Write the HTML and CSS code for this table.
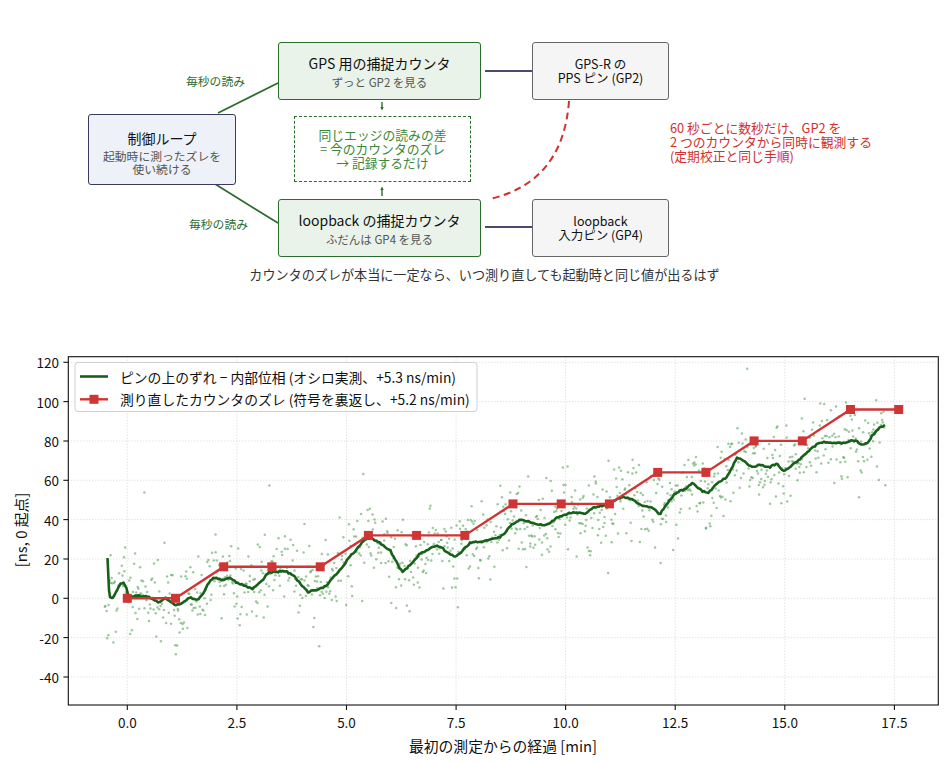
FILE: index.html
```html
<!DOCTYPE html>
<html lang="ja">
<head>
<meta charset="utf-8">
<title>カウンタのズレ</title>
<link rel="stylesheet" href="styles.css">
</head>
<body>
<div class="page">
  <section class="diagram">
    <svg class="wires" width="948" height="300" viewBox="0 0 948 300">
      <line x1="218" y1="113" x2="278" y2="83" class="w-green"/>
      <line x1="215" y1="184" x2="278" y2="223" class="w-green"/>
      <line x1="485" y1="71" x2="532" y2="71" class="w-navy"/>
      <line x1="485" y1="227" x2="532" y2="227" class="w-navy"/>
      <line x1="382" y1="102" x2="382" y2="109" class="w-tiny"/>
      <path d="M380.3,107 L382,110.5 L383.7,107 Z" class="a-tiny"/>
      <line x1="382" y1="188" x2="382" y2="196" class="w-tiny"/>
      <path d="M380.3,190 L382,186.5 L383.7,190 Z" class="a-tiny"/>
      <path d="M569,101 Q563,182 490,199" class="w-red"/>
    </svg>

    <div class="node ctrl">
      <div class="title">制御ループ</div>
      <div class="sub">起動時に測ったズレを<br>使い続ける</div>
    </div>
    <div class="node cnt gps">
      <div class="title">GPS 用の捕捉カウンタ</div>
      <div class="sub">ずっと GP2 を見る</div>
    </div>
    <div class="node cnt lb">
      <div class="title">loopback の捕捉カウンタ</div>
      <div class="sub">ふだんは GP4 を見る</div>
    </div>
    <div class="node diff">同じエッジの読みの差<br>= 今のカウンタのズレ<br>→ 記録するだけ</div>
    <div class="node pin pin1">GPS-R の<br>PPS ピン (GP2)</div>
    <div class="node pin pin2">loopback<br>入力ピン (GP4)</div>

    <div class="edge-label el1">毎秒の読み</div>
    <div class="edge-label el2">毎秒の読み</div>
    <div class="red-note">60 秒ごとに数秒だけ、GP2 を<br>2 つのカウンタから同時に観測する<br>(定期校正と同じ手順)</div>
    <p class="caption">カウンタのズレが本当に一定なら、いつ測り直しても起動時と同じ値が出るはず</p>
  </section>

  <section class="chart">
    <svg id="plot" width="948" height="464" viewBox="0 300 948 464">
      <g class="grid">
        <line x1="127.3" y1="356.7" x2="127.3" y2="705"/>
        <line x1="236.9" y1="356.7" x2="236.9" y2="705"/>
        <line x1="346.5" y1="356.7" x2="346.5" y2="705"/>
        <line x1="456.1" y1="356.7" x2="456.1" y2="705"/>
        <line x1="565.6" y1="356.7" x2="565.6" y2="705"/>
        <line x1="675.2" y1="356.7" x2="675.2" y2="705"/>
        <line x1="784.8" y1="356.7" x2="784.8" y2="705"/>
        <line x1="894.4" y1="356.7" x2="894.4" y2="705"/>
        <line x1="68.3" y1="677" x2="938.3" y2="677"/>
        <line x1="68.3" y1="637.6" x2="938.3" y2="637.6"/>
        <line x1="68.3" y1="598.3" x2="938.3" y2="598.3"/>
        <line x1="68.3" y1="559" x2="938.3" y2="559"/>
        <line x1="68.3" y1="519.6" x2="938.3" y2="519.6"/>
        <line x1="68.3" y1="480.3" x2="938.3" y2="480.3"/>
        <line x1="68.3" y1="441" x2="938.3" y2="441"/>
        <line x1="68.3" y1="401.6" x2="938.3" y2="401.6"/>
        <line x1="68.3" y1="362.3" x2="938.3" y2="362.3"/>
      </g>
      <g id="dots" class="dots"></g>
      <polyline id="phase" class="phase" points=""/>
      <polyline class="redline" points="127.3,598.3 175.5,598.3 223.7,566.8 271.9,566.8 320.2,566.8 368.4,535.4 416.6,535.4 464.8,535.4 513,503.9 561.2,503.9 609.4,503.9 657.7,472.4 705.9,472.4 754.1,440.9 802.3,440.9 850.5,409.5 898.7,409.5"/>
      <g class="marks">
        <rect x="122.8" y="593.8" width="9" height="9"/>
        <rect x="171" y="593.8" width="9" height="9"/>
        <rect x="219.2" y="562.3" width="9" height="9"/>
        <rect x="267.4" y="562.3" width="9" height="9"/>
        <rect x="315.7" y="562.3" width="9" height="9"/>
        <rect x="363.9" y="530.9" width="9" height="9"/>
        <rect x="412.1" y="530.9" width="9" height="9"/>
        <rect x="460.3" y="530.9" width="9" height="9"/>
        <rect x="508.5" y="499.4" width="9" height="9"/>
        <rect x="556.7" y="499.4" width="9" height="9"/>
        <rect x="604.9" y="499.4" width="9" height="9"/>
        <rect x="653.2" y="467.9" width="9" height="9"/>
        <rect x="701.4" y="467.9" width="9" height="9"/>
        <rect x="749.6" y="436.4" width="9" height="9"/>
        <rect x="797.8" y="436.4" width="9" height="9"/>
        <rect x="846" y="405" width="9" height="9"/>
        <rect x="894.2" y="405" width="9" height="9"/>
      </g>
      <rect class="frame" x="68.3" y="356.7" width="870" height="348.3"/>
      <g class="ticks">
        <line x1="63.4" y1="677" x2="68.3" y2="677"/>
        <line x1="63.4" y1="637.6" x2="68.3" y2="637.6"/>
        <line x1="63.4" y1="598.3" x2="68.3" y2="598.3"/>
        <line x1="63.4" y1="559" x2="68.3" y2="559"/>
        <line x1="63.4" y1="519.6" x2="68.3" y2="519.6"/>
        <line x1="63.4" y1="480.3" x2="68.3" y2="480.3"/>
        <line x1="63.4" y1="441" x2="68.3" y2="441"/>
        <line x1="63.4" y1="401.6" x2="68.3" y2="401.6"/>
        <line x1="63.4" y1="362.3" x2="68.3" y2="362.3"/>
        <line x1="127.3" y1="705" x2="127.3" y2="710"/>
        <line x1="236.9" y1="705" x2="236.9" y2="710"/>
        <line x1="346.5" y1="705" x2="346.5" y2="710"/>
        <line x1="456.1" y1="705" x2="456.1" y2="710"/>
        <line x1="565.6" y1="705" x2="565.6" y2="710"/>
        <line x1="675.2" y1="705" x2="675.2" y2="710"/>
        <line x1="784.8" y1="705" x2="784.8" y2="710"/>
        <line x1="894.4" y1="705" x2="894.4" y2="710"/>
      </g>
      <g class="ylab">
        <text x="59" y="677">-40</text>
        <text x="59" y="637.6">-20</text>
        <text x="59" y="598.3">0</text>
        <text x="59" y="559">20</text>
        <text x="59" y="519.6">40</text>
        <text x="59" y="480.3">60</text>
        <text x="59" y="441">80</text>
        <text x="59" y="401.6">100</text>
        <text x="59" y="362.3">120</text>
      </g>
      <g class="xlab">
        <text x="127.3" y="722">0.0</text>
        <text x="236.9" y="722">2.5</text>
        <text x="346.5" y="722">5.0</text>
        <text x="456.1" y="722">7.5</text>
        <text x="565.6" y="722">10.0</text>
        <text x="675.2" y="722">12.5</text>
        <text x="784.8" y="722">15.0</text>
        <text x="894.4" y="722">17.5</text>
      </g>
      <text class="axis-title" x="503" y="745">最初の測定からの経過 [min]</text>
      <text class="axis-title" transform="translate(20,530) rotate(-90)" x="0" y="0">[ns, 0 起点]</text>

      <g class="legend">
        <rect class="legend-box" x="75" y="362.5" width="402" height="49" rx="3"/>
        <line x1="80" y1="376.5" x2="108" y2="376.5" class="leg-green"/>
        <text x="120" y="376.5">ピンの上のずれ − 内部位相 (オシロ実測、+5.3 ns/min)</text>
        <line x1="80" y1="399.3" x2="108" y2="399.3" class="leg-red"/>
        <rect x="89.5" y="394.8" width="9" height="9" class="leg-mark"/>
        <text x="120" y="399.3">測り直したカウンタのズレ (符号を裏返し、+5.2 ns/min)</text>
      </g>
    </svg>
  </section>
</div>
<script src="script.js"></script>
</body>
</html>
```

FILE: styles.css
```css
html, body {
  margin: 0;
  padding: 0;
  background: #ffffff;
}
body {
  width: 948px;
  height: 764px;
  overflow: hidden;
  font-family: "Noto Sans CJK JP", "Noto Sans", sans-serif;
  color: #111;
}
.page {
  display: flex;
  flex-direction: column;
  width: 948px;
  height: 764px;
}
.diagram {
  position: relative;
  width: 948px;
  height: 300px;
  flex: none;
}
.wires {
  position: absolute;
  left: 0;
  top: 0;
}
.w-green { stroke: #2b6b2b; stroke-width: 1.7; }
.w-navy { stroke: #4a4a6c; stroke-width: 2; }
.w-tiny { stroke: #2b6b2b; stroke-width: 1.4; }
.a-tiny { fill: #2b6b2b; }
.w-red { stroke: #d03030; stroke-width: 2; fill: none; stroke-dasharray: 7 4.5; }

.node {
  position: absolute;
  box-sizing: border-box;
  display: flex;
  flex-direction: column;
  align-items: center;
  justify-content: center;
  text-align: center;
  border-radius: 3px;
}
.node .title {
  font-size: 14px;
  line-height: 18px;
  color: #111;
}
.node .sub {
  font-size: 11.5px;
  line-height: 13px;
  color: #555;
}
.ctrl {
  left: 88px;
  top: 114px;
  width: 148px;
  height: 71px;
  padding-top: 4px;
  border: 1.6px solid #3a3a5c;
  background: #eef1f8;
}
.ctrl .title { margin-bottom: 2px; }
.ctrl .sub { font-size: 11.8px; }
.cnt {
  left: 278px;
  width: 203px;
  height: 58px;
  border: 1.6px solid #2b6b2b;
  background: #e9f3e9;
  gap: 4px;
}
.gps { top: 42px; }
.lb { top: 199px; }
.diff {
  left: 294px;
  top: 116px;
  width: 177px;
  height: 66px;
  border: 1.6px dashed #2b6b2b;
  border-radius: 0;
  background: #ffffff;
  color: #3b873b;
  font-size: 12.8px;
  line-height: 14px;
}
.pin {
  left: 532px;
  width: 137px;
  height: 58px;
  border: 1.6px solid #666666;
  background: #f5f5f5;
  font-size: 12.5px;
  line-height: 14.5px;
  color: #111;
}
.pin1 { top: 42px; }
.pin2 { top: 199px; }

.edge-label {
  position: absolute;
  font-size: 11.8px;
  line-height: 14px;
  color: #2b6b2b;
}
.el1 { left: 186px; top: 74px; }
.el2 { left: 189px; top: 217px; }
.red-note {
  position: absolute;
  left: 670px;
  top: 121px;
  font-size: 12.8px;
  line-height: 13.9px;
  color: #d03030;
}
.caption {
  position: absolute;
  left: 0;
  right: 0;
  top: 266px;
  margin: 0;
  padding-left: 21px;
  text-align: center;
  font-size: 13.1px;
  line-height: 18px;
  color: #333;
}

.chart {
  flex: none;
  width: 948px;
  height: 464px;
}
#plot {
  display: block;
  font-family: "Noto Sans CJK JP", "Noto Sans", sans-serif;
}
.grid line {
  stroke: #d2d2d2;
  stroke-width: 0.9;
  stroke-dasharray: 1 2;
}
.dots circle {
  fill: #4f9a4f;
  fill-opacity: 0.55;
}
.phase {
  fill: none;
  stroke: #17601a;
  stroke-width: 2.6;
  stroke-linejoin: round;
}
.redline {
  fill: none;
  stroke: #d03535;
  stroke-width: 2.4;
}
.marks rect { fill: #d03535; }
.frame {
  fill: none;
  stroke: #111;
  stroke-width: 1.1;
}
.ticks line {
  stroke: #111;
  stroke-width: 1.1;
}
.ylab text {
  font-size: 13.5px;
  text-anchor: end;
  dominant-baseline: central;
  fill: #111;
}
.xlab text {
  font-size: 13.5px;
  text-anchor: middle;
  dominant-baseline: central;
  fill: #111;
}
.axis-title {
  font-size: 14.8px;
  text-anchor: middle;
  dominant-baseline: central;
  fill: #111;
}
.legend-box {
  fill: #ffffff;
  fill-opacity: 0.85;
  stroke: #cfcfcf;
  stroke-width: 1;
}
.legend text {
  font-size: 13.8px;
  dominant-baseline: central;
  fill: #111;
}
.leg-green { stroke: #17601a; stroke-width: 2.6; }
.leg-red { stroke: #d03535; stroke-width: 2.4; }
.leg-mark { fill: #d03535; }
```

FILE: script.js
```js
(function () {
  var pts = [
    [107.5,558],[109,590],[110,597],[112,598],[115,595],[118,588],[121,583],[124,583],[126.5,588],[128.5,597],
    [133,596],[137,595],[142,597],[147,596],[151,598],[155,601],[160,602.5],[163,600],[166,598],[170,602],
    [174,604],[178,605],[182,603],[186,600],[190,597],[194,599],[197,600],[200,597],[203,594],[207,586],
    [210,581],[214,578],[217,578],[221,580],[225,580],[229,578],[233,580],[237,583],[243,585],[248,587],
    [252,589],[256,586],[260,583],[264,578],[268,573],[272,572],[277,572],[282,571],[287,572],[291,574],
    [295,577],[299,582],[303,587],[308,592],[312,591],[317,590],[322,588],[327,585],[332,579],[337,573],
    [343,566],[350,556],[356,550],[361,544],[365,539],[370,538],[375,540],[380,543],[385,547],[390,550],
    [393,556],[397,563],[400,569],[403,572],[406,569],[410,565],[415,560],[420,553],[425,551],[430,548],
    [434,547],[438,546],[442,548],[447,552],[451,555],[455,556],[459,554],[463,550],[467,546],[470,543],
    [475,542],[480,542],[485,541],[490,540],[495,538],[500,537],[505,533],[510,526],[515,523],[520,520],
    [525,521],[530,522],[536,524],[541,525],[547,525],[552,521],[557,518],[562,516],[567,514],[573,512],
    [579,513],[585,514],[589,511],[593,508],[598,507],[604,505],[610,503],[616,500],[622,497],[626,498],
    [630,499],[635,501],[640,505],[645,506],[650,507],[655,510],[660,514],[665,507],[670,500],[674,495],
    [678,492],[683,490],[687,488],[690,485],[693,483],[697,487],[702,491],[705,492],[708,493],[712,489],
    [717,483],[722,480],[727,477],[732,468],[737,457],[741,459],[745,462],[749,465],[752,467],[756,466],
    [760,465],[765,466],[770,467],[774,465],[777,464],[780,468],[783,471],[787,469],[790,467],[795,463],
    [800,459],[805,455],[810,450],[815,446],[820,442],[826,442],[833,443],[838,443],[843,443],[848,442],
    [853,440],[858,442],[862,445],[865,444],[868,442],[872,436],[877,430],[881,427],[885,425]
  ];

  var seed = 20240611;
  function rnd() {
    seed |= 0; seed = seed + 0x6D2B79F5 | 0;
    var t = Math.imul(seed ^ seed >>> 15, 1 | seed);
    t = t + Math.imul(t ^ t >>> 7, 61 | t) ^ t;
    return ((t ^ t >>> 14) >>> 0) / 4294967296;
  }
  function gauss() {
    var u = 1 - rnd(), v = rnd();
    return Math.sqrt(-2 * Math.log(u)) * Math.cos(2 * Math.PI * v);
  }
  function lineY(x) {
    if (x <= pts[0][0]) return pts[0][1];
    for (var i = 1; i < pts.length; i++) {
      if (x <= pts[i][0]) {
        var a = pts[i - 1], b = pts[i];
        var f = (x - a[0]) / (b[0] - a[0]);
        return a[1] + f * (b[1] - a[1]);
      }
    }
    return pts[pts.length - 1][1];
  }

  // phase line: exact control points at the start, light jitter afterwards
  var out = [];
  for (var j = 0; j < 4; j++) out.push(pts[j][0] + "," + pts[j][1]);
  for (var x = 113; x <= 885; x += 1.5) {
    var y = lineY(x) + (rnd() - 0.5) * 1.4;
    out.push(x.toFixed(1) + "," + y.toFixed(1));
  }
  out.push("885,425");
  document.getElementById("phase").setAttribute("points", out.join(" "));

  // scatter around the phase line
  var ns = "http://www.w3.org/2000/svg";
  var g = document.getElementById("dots");
  var N = 1000;
  var x0 = 105, x1 = 886;
  for (var k = 0; k < N; k++) {
    var px = x0 + (x1 - x0) * k / N + (rnd() - 0.5) * 0.8;
    var base = lineY(Math.max(px, 112));
    var sd = px < 200 ? 21 : 19;
    var dy = gauss() * sd - 2;
    if (rnd() < 0.06) dy = gauss() * 40;
    var py = base + dy;
    if (py < 360 || py > 702) continue;
    var c = document.createElementNS(ns, "circle");
    c.setAttribute("cx", px.toFixed(1));
    c.setAttribute("cy", py.toFixed(1));
    c.setAttribute("r", "1.25");
    g.appendChild(c);
  }
})();
```
